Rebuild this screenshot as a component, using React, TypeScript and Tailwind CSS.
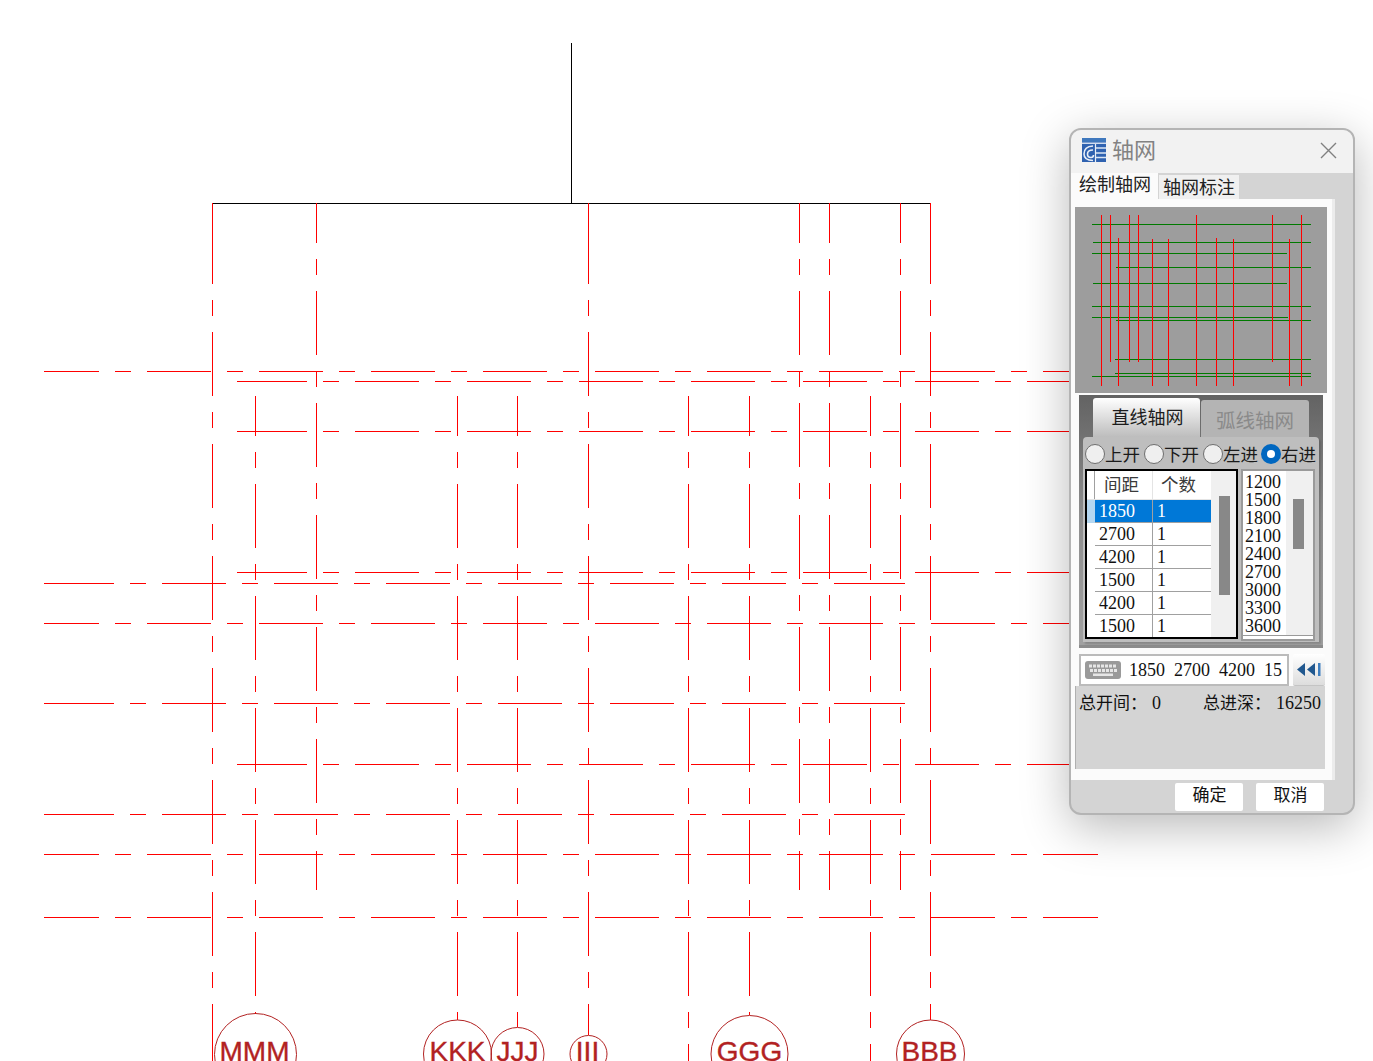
import React from "react";

const RED = "#ff0000";
const DASH = "64 16 16 16";

type Seg = { x1: number; y1: number; x2: number; y2: number; off?: number; solid?: boolean };

const segs: Seg[] = [];
function v(x: number, y1: number, y2: number, phase: number) {
  if (phase > y1) {
    segs.push({ x1: x, y1, x2: x, y2: phase, solid: true });
    segs.push({ x1: x, y1: phase, x2: x, y2, off: 0 });
  } else {
    segs.push({ x1: x, y1, x2: x, y2, off: y1 - phase });
  }
}
function h(y: number, x1: number, x2: number, phase: number) {
  if (phase > x1) {
    segs.push({ x1, y1: y, x2: phase, y2: y, solid: true });
    segs.push({ x1: phase, y1: y, x2, y2: y, off: 0 });
  } else {
    segs.push({ x1, y1: y, x2, y2: y, off: x1 - phase });
  }
}
// Long-through axes
v(212, 203, 1061, 220);
v(588, 203, 1035, 220);
v(930, 203, 1020, 220);
// Upper axes
[316, 799, 829, 900].forEach((x) => v(x, 203, 890, 179));
// Lower axes
v(255, 396, 1014, 372);
v(457, 396, 1020, 372);
v(517, 396, 1027, 372);
v(688, 396, 1061, 372);
v(749, 396, 1015, 372);
v(870, 396, 1061, 372);
// Horizontal axes
h(371, 44, 1072, 35);
h(381, 237, 1072, 243);
h(431, 237, 1072, 243);
h(572, 237, 1072, 243);
h(623, 44, 1072, 35);
h(764, 237, 1072, 243);
h(854, 44, 1098, 35);
h(917, 44, 1098, 35);
[583, 703, 814].forEach((y) => {
  h(y, 44, 898, 50);
  segs.push({ x1: 896, y1: y, x2: 905, y2: y, solid: true });
});

const bubbles = [
  { cx: 255.5, r: 41, cy: 1054.5, t: "MMM", dx: -1 },
  { cx: 457.5, r: 34, cy: 1054, t: "KKK", dx: 0 },
  { cx: 517.5, r: 26.5, cy: 1054, t: "JJJ", dx: 0 },
  { cx: 588.5, r: 18.5, cy: 1054, t: "III", dx: -1 },
  { cx: 749.5, r: 38.5, cy: 1054, t: "GGG", dx: 0 },
  { cx: 930.5, r: 34, cy: 1054, t: "BBB", dx: -1 },
];

const pvRed: [number, number, number][] = [
  [109, 270, 782], [136, 270, 710], [160, 340, 782], [193, 270, 710], [220, 270, 710],
  [262, 342, 782], [310, 342, 782], [394, 270, 782], [454, 340, 782], [505, 342, 782],
  [622, 270, 712], [673, 342, 782], [709, 270, 782],
];
const pvGreen: [number, number, number][] = [
  [298, 81, 738], [352, 84, 738], [385, 81, 666], [427, 153, 738], [475, 84, 666],
  [544, 81, 738], [577, 81, 669], [586, 153, 738], [703, 150, 738], [745, 150, 738], [754, 81, 738],
];

function Radio({ label, on, cls }: { label: string; on?: boolean; cls: string }) {
  return (
    <div className={`flex items-center h-[20px] ${cls}`}>
      {on ? (
        <span className="w-[20px] h-[20px] shrink-0 rounded-full bg-[#0067c0] flex items-center justify-center">
          <span className="w-[8px] h-[8px] rounded-full bg-white" />
        </span>
      ) : (
        <span className="w-[20px] h-[20px] shrink-0 rounded-full bg-[#efefef] border border-[#6e6e6e]" />
      )}
      <span className="text-[17.5px] leading-[20px] mt-px text-[#1a1a1a]">{label}</span>
    </div>
  );
}

const rows = ["1850", "2700", "4200", "1500", "4200", "1500"];
const list = ["1200", "1500", "1800", "2100", "2400", "2700", "3000", "3300", "3600"];

export default function App() {
  return (
    <div className="relative w-[1373px] h-[1061px] overflow-hidden bg-white font-['Liberation_Serif','Noto_Sans_CJK_SC',serif]">
      <svg width="1373" height="1061" className="block">
        <g shapeRendering="crispEdges" strokeWidth="1" fill="none">
          <line x1="212" y1="203.5" x2="931" y2="203.5" stroke="#000" />
          <line x1="571.5" y1="43" x2="571.5" y2="203" stroke="#000" />
          {segs.map((s, i) => {
            const vert = s.x1 === s.x2;
            return (
              <line
                key={i}
                x1={vert ? s.x1 + 0.5 : s.x1}
                x2={vert ? s.x2 + 0.5 : s.x2}
                y1={vert ? s.y1 : s.y1 + 0.5}
                y2={vert ? s.y2 : s.y2 + 0.5}
                stroke={RED}
                strokeDasharray={s.solid ? undefined : DASH}
                strokeDashoffset={s.off ?? 0}
              />
            );
          })}
        </g>
        {bubbles.map((b) => (
          <g key={b.t}>
            <circle cx={b.cx} cy={b.cy} r={b.r} fill="none" stroke="#b22222" strokeWidth="1" />
            <text
              x={b.cx + b.dx}
              y={1061}
              textAnchor="middle"
              fontSize="28"
              fill="#b22222"
              stroke="#b22222"
              strokeWidth="0.35"
              fontFamily="'Liberation Sans', sans-serif"
            >
              {b.t}
            </text>
          </g>
        ))}
      </svg>

      {/* Floating dialog window */}
      <div className="absolute left-[1069px] top-[128px] w-[286px] h-[687px] rounded-[12px] border-2 border-[#b4b4b4] bg-[#d4d4d4] overflow-hidden shadow-[0_12px_48px_rgba(0,0,0,0.28)] flex flex-col">
        {/* Title bar */}
        <div className="h-[43px] shrink-0 bg-[#f2f2f2] flex items-center pl-[11px] pr-[16px]">
          <svg width="24" height="24" viewBox="0 0 24 24" className="shrink-0 -mt-[4px]">
            <rect width="24" height="24" fill="#2f62b0" />
            <rect width="24" height="4" fill="#3f78bd" />
            <rect y="4.5" width="24" height="1.5" fill="#cfdcef" />
            <path d="M11 8 Q2 8.5 2 16 Q2 22.5 11 22.5" fill="none" stroke="#e8eef7" strokeWidth="1.6" />
            <path d="M11 12 Q5.5 12 5.5 16 Q5.5 19.5 9 19.5 Q11.5 19.5 11.5 17" fill="none" stroke="#e8eef7" strokeWidth="1.6" />
            <path d="M13.5 6 V24" stroke="#e8eef7" strokeWidth="1.2" />
            <path d="M14 10 H24 M14 15 H24 M14 19.5 H24" stroke="#dbe6f4" strokeWidth="1.3" />
          </svg>
          <span className="ml-[6px] text-[22px] leading-[28px] text-[#828282] -mt-[2px]">轴网</span>
          <svg width="17" height="17" viewBox="0 0 17 17" className="ml-auto -mt-[2px]" stroke="#808080" strokeWidth="1.4">
            <path d="M1 1 L16 16 M16 1 L1 16" />
          </svg>
        </div>

        {/* Outer tabs */}
        <div className="h-[26px] shrink-0 flex">
          <div className="w-[87px] h-full bg-[#fbfbfb] pl-[8px] text-[18px] leading-[25px] text-[#222]">绘制轴网</div>
          <div className="w-[80px] h-[24px] mt-[2px] ml-px bg-[#f0f0f0] pl-[4px] text-[18px] leading-[26px] text-[#222]">轴网标注</div>
        </div>

        {/* Main white panel */}
        <div className="w-[264px] h-[581px] shrink-0 bg-[#fbfbfb] border-r-[3px] border-[#ececec] pl-[4px] pt-[8px] flex flex-col">
          <div className="w-[252px] h-[186px] shrink-0 bg-[#9d9d9d]">
            <svg width="252" height="186" shapeRendering="crispEdges">
              {pvGreen.map(([y, a, b], i) => (
                <line key={i} x1={a / 3 - 10} x2={b / 3 - 10} y1={Math.floor(y / 3 - 82) + 0.5} y2={Math.floor(y / 3 - 82) + 0.5} stroke="#007a00" />
              ))}
              {pvRed.map(([x, a, b], i) => (
                <line key={i} x1={Math.floor(x / 3 - 10) + 0.5} x2={Math.floor(x / 3 - 10) + 0.5} y1={a / 3 - 82} y2={b / 3 - 82} stroke="#ff0000" />
              ))}
            </svg>
          </div>

          {/* Dark group */}
          <div className="ml-[4px] mt-[2px] w-[244px] h-[253px] shrink-0 bg-gradient-to-b from-[#636363] via-[#8f8f8f] to-[#a0a0a0] border-b-[3px] border-[#8c8c8c] flex flex-col">
            <div className="h-[42px] shrink-0 flex items-end pl-[14px]">
              <div className="w-[107px] h-[39px] rounded-t-[3px] bg-gradient-to-b from-[#ffffff] to-[#bdbdbd] pl-[2px] text-center text-[18px] leading-[40px] text-[#1c1c1c]">直线轴网</div>
              <div className="w-[108px] h-[37px] ml-px rounded-t-[3px] bg-[#b4b4b4] text-center text-[19.5px] leading-[44px] text-[#8a8a8a]">弧线轴网</div>
            </div>
            <div className="mx-[4px] h-[205px] rounded-t-[4px] bg-[#bebebe] shadow-[2px_2px_2px_rgba(0,0,0,0.15)] flex flex-col">
              <div className="h-[32px] shrink-0 flex items-center pl-[2px] pt-[2px]">
                <Radio label="上开" cls="w-[59px]" />
                <Radio label="下开" cls="w-[59px]" />
                <Radio label="左进" cls="w-[58px]" />
                <Radio label="右进" on cls="w-[58px]" />
              </div>
              <div className="flex pl-[2px]">
                {/* Spacing grid */}
                <div className="w-[153px] h-[170px] border-2 border-black bg-[#f0f0f0] flex overflow-hidden">
                  <div className="w-[124px] shrink-0">
                    <div className="h-[29px] flex bg-white border-b border-[#e4e4e4]">
                      <div className="w-[8px] border-r border-[#a0a0a0]" />
                      <div className="w-[58px] border-r border-[#e4e4e4] pl-[9px] text-[17.5px] leading-[28px] text-[#3a3a3a]">间距</div>
                      <div className="flex-1 pl-[8px] text-[17.5px] leading-[28px] text-[#3a3a3a]">个数</div>
                    </div>
                    {rows.map((r, i) => (
                      <div key={i} className={`h-[23px] flex text-[18px] leading-[22px] ${i === 0 ? "bg-[#0078d7] text-white" : "bg-white text-[#111]"}`}>
                        <div className={`w-[8px] shrink-0 ${i === 0 ? "bg-[#b5d7f0]" : "bg-white"}`} />
                        <div className={`w-[58px] shrink-0 pl-[4px] border-r border-[#a0a0a0] ${i === 5 ? "" : "border-b"}`}>{r}</div>
                        <div className={`flex-1 pl-[4px] border-[#a0a0a0] ${i === 5 ? "" : "border-b"}`}>1</div>
                      </div>
                    ))}
                  </div>
                  <div className="flex-1 pt-[25px] pl-[8px]">
                    <div className="w-[11px] h-[99px] bg-[#888888]" />
                  </div>
                </div>
                {/* Preset list */}
                <div className="ml-[3px] w-[74px] h-[172px] border-2 border-[#9a9a9a] bg-white flex">
                  <div className="w-[43px] shrink-0 border-b border-[#9a9a9a] h-[165px] pl-[2px] pt-[2px]">
                    {list.map((n, i) => (
                      <div key={i} className="h-[18px] text-[18px] leading-[18px] text-[#111]">{n}</div>
                    ))}
                  </div>
                  <div className="w-[27px] h-[165px] bg-[#f0f0f0] border-b border-[#9a9a9a] pl-[7px] pt-[28px]">
                    <div className="w-[11px] h-[50px] bg-[#888888]" />
                  </div>
                </div>
              </div>
            </div>
          </div>

          {/* Input row */}
          <div className="ml-[4px] mt-[6px] h-[32px] shrink-0 flex">
            <div className="w-[210px] h-full border-2 border-[#bbbbbb] bg-white flex items-center pl-[4px]">
              <svg width="36" height="18" viewBox="0 0 36 18" className="shrink-0">
                <rect width="36" height="18" rx="3" fill="#9a9a9a" />
                {[0, 1, 2, 3, 4, 5, 6].map((i) => (
                  <rect key={i} x={4 + i * 4} y="3.5" width="3" height="3" fill="#e6e6e6" />
                ))}
                {[0, 1, 2, 3, 4, 5, 6].map((i) => (
                  <rect key={i} x={5 + i * 4} y="8" width="3" height="3" fill="#e6e6e6" />
                ))}
                <rect x="8" y="12.5" width="20" height="2.5" fill="#e6e6e6" />
              </svg>
              <span className="ml-[8px] text-[18px] leading-[28px] text-[#111] whitespace-pre">1850  2700  4200  15</span>
            </div>
            <div className="ml-[4px] w-[32px] h-full rounded-[2px] bg-gradient-to-b from-[#ffffff] to-[#dddddd] border-b border-[#c4c4c4] flex items-center justify-center">
              <svg width="24" height="13" viewBox="0 0 24 13">
                <path d="M0 6.5 L8 0 V13 Z M10 6.5 L18 0 V13 Z" fill="#21588f" />
                <rect x="21" y="0" width="2.5" height="13" fill="#3f7fbf" />
              </svg>
            </div>
          </div>

          {/* Totals */}
          <div className="w-[250px] h-[83px] shrink-0 bg-[#d4d4d4] border-l border-[#b0b0b0] pl-[3px] pt-[5px] flex leading-[24px] text-[#111]">
            <div className="w-[124px] text-[17px] whitespace-pre">总开间：<span className="text-[18px] ml-[5px]">0</span></div>
            <div className="text-[17px] whitespace-pre">总进深：<span className="text-[18px] ml-[5px]">16250</span></div>
          </div>
        </div>

        {/* Footer buttons */}
        <div className="flex-1 flex items-start justify-end gap-[13px] pt-[3px] pr-[29px]">
          <button className="w-[68px] h-[28px] rounded-[2px] bg-white pl-[1px] pb-[2px] text-[17px] leading-[24px] text-[#111]">确定</button>
          <button className="w-[68px] h-[28px] rounded-[2px] bg-white pl-[1px] pb-[2px] text-[17px] leading-[24px] text-[#111]">取消</button>
        </div>
      </div>
    </div>
  );
}
